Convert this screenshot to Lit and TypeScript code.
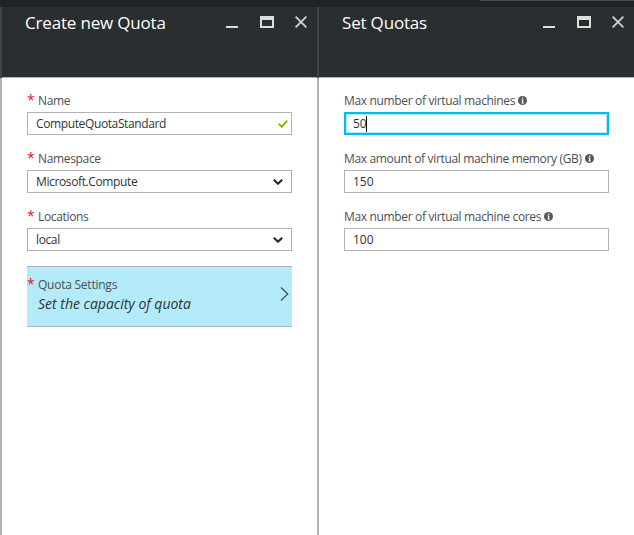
import { LitElement, html, css, nothing } from "lit";
import { customElement, property } from "lit/decorators.js";

const infoIcon = html`<svg class="info" width="9" height="9" viewBox="0 0 9 9">
  <circle cx="4.5" cy="4.5" r="4.5" fill="#55575a" />
  <path d="M4 1.5h1.3v1.2H4zM3.5 3.6h1.8v3.1h.6v.8H3.4v-.8H4V4.4h-.5z" fill="#fff" />
</svg>`;

@customElement("blade-pane")
class BladePane extends LitElement {
  @property() heading = "";

  static styles = css`
    :host {
      display: flex;
      flex-direction: column;
      width: 317px;
      flex: none;
      box-sizing: border-box;
      background: #fff;
    }
    header {
      display: flex;
      height: 71px;
      box-sizing: border-box;
      border-left: 2px solid #3f4447;
      background: #292e31;
      color: #fff;
      padding: 4px 10px 0 23px;
      justify-content: space-between;
      align-items: flex-start;
      box-shadow: inset 0 -1px #b2b2b2;
    }
    .heading {
      font-size: 17px;
      line-height: 24px;
      letter-spacing: -0.18px;
      white-space: nowrap;
    }
    .controls {
      display: block;
      margin-top: 5px;
      flex: none;
    }
    .body {
      flex: 1;
      border-left: 2px solid #b2b2b2;
      padding: 12px 25px 0 25px;
    }
  `;

  render() {
    return html`<header>
        <span class="heading">${this.heading}</span>
        <svg class="controls" width="81" height="12" viewBox="0 0 81 12">
          <path d="M0 10h12v2H0z" fill="#dcdedd" />
          <path d="M34 0h14v12H34zM36 4v6h10V4z" fill="#dcdedd" fill-rule="evenodd" />
          <path d="M69.6.6l10.8 10.8M80.4.6L69.6 11.4" stroke="#d0d3d5" stroke-width="1.8" />
        </svg>
      </header>
      <div class="body"><slot></slot></div>`;
  }
}

@customElement("form-field")
class FormField extends LitElement {
  @property() label = "";
  @property() value = "";
  @property() kind = "text";
  @property({ type: Boolean }) required = false;
  @property({ type: Boolean }) info = false;
  @property({ type: Boolean }) focused = false;

  static styles = css`
    :host {
      display: block;
      height: 45px;
      margin-bottom: 13px;
    }
    .label {
      display: flex;
      align-items: center;
      height: 22px;
      color: #4c4f52;
      white-space: nowrap;
      letter-spacing: -0.34px;
    }
    .star {
      width: 11px;
      flex: none;
      color: #e0142d;
      font-size: 14px;
      margin-bottom: 2px;
    }
    .info {
      margin: 0 0 1px 3px;
      flex: none;
    }
    .box {
      display: flex;
      align-items: center;
      justify-content: space-between;
      box-sizing: border-box;
      height: 23px;
      border: 1px solid #b2b2b2;
      padding-left: 8px;
      color: #303336;
    }
    .focused {
      border: 2px solid #00bcf2;
      box-shadow: inset 0 0 0 1px #b3ebfb;
      padding-left: 7px;
    }
    .value {
      display: flex;
      align-items: center;
    }
    .value.words {
      letter-spacing: -0.38px;
    }
    .caret {
      width: 1px;
      height: 16px;
      margin-left: -1px;
      background: #000;
    }
    .check {
      margin-right: 3px;
    }
    .chevron {
      margin-right: 8px;
    }
  `;

  render() {
    return html`<div class="label">
        ${this.required ? html`<span class="star">*</span>` : nothing}
        <span>${this.label}</span>${this.info ? infoIcon : nothing}
      </div>
      <div class="box ${this.focused ? "focused" : ""}">
        <span class="value ${this.kind === "text" ? "" : "words"}">${this.value}${this.focused ? html`<i class="caret"></i>` : nothing}</span>
        ${this.kind === "valid"
          ? html`<svg class="check" width="10" height="8" viewBox="0 0 10 8">
              <path d="M.6 3.6L3.8 6.7L9.3.7" fill="none" stroke="#7fba00" stroke-width="1.9" />
            </svg>`
          : nothing}
        ${this.kind === "select"
          ? html`<svg class="chevron" width="10" height="6" viewBox="0 0 10 6">
              <path d="M.8.7L5 4.7L9.2.7" fill="none" stroke="#25282b" stroke-width="2.1" />
            </svg>`
          : nothing}
      </div>`;
  }
}

@customElement("app-root")
class AppRoot extends LitElement {
  static styles = css`
    :host {
      display: flex;
      flex-direction: column;
      height: 535px;
      overflow: hidden;
      background: #fff;
      font: 12px/16px "Open Sans", "Noto Sans", sans-serif;
    }
    .topbar {
      height: 7px;
      flex: none;
      display: flex;
      justify-content: flex-end;
      background: #1f2226;
    }
    .search-edge {
      width: 154px;
      height: 1px;
      background: #4a4f53;
    }
    .blades {
      flex: 1;
      display: flex;
    }
    .selector {
      display: flex;
      justify-content: space-between;
      box-sizing: border-box;
      height: 61px;
      margin-top: 15px;
      border: solid #b2b2b2;
      border-width: 1px 0;
      background: #b3ebfb;
      padding: 10px 3px 0 0;
      color: #4c4f52;
    }
    .star {
      width: 11px;
      color: #e0142d;
      font-size: 14px;
      margin-top: -1px;
    }
    .texts {
      flex: 1;
      display: flex;
      flex-direction: column;
      letter-spacing: -0.24px;
    }
    .summary {
      font-size: 14px;
      line-height: 22px;
      letter-spacing: 0;
      font-style: italic;
      color: #303336;
    }
    .arrow {
      margin-top: 10px;
    }
  `;

  render() {
    return html`<div class="topbar"><span class="search-edge"></span></div>
      <div class="blades">
        <blade-pane heading="Create new Quota">
          <form-field label="Name" value="ComputeQuotaStandard" kind="valid" required></form-field>
          <form-field label="Namespace" value="Microsoft.Compute" kind="select" required></form-field>
          <form-field label="Locations" value="local" kind="select" required></form-field>
          <div class="selector">
            <span class="star">*</span>
            <div class="texts">
              <span>Quota Settings</span>
              <span class="summary">Set the capacity of quota</span>
            </div>
            <svg class="arrow" width="9" height="14" viewBox="0 0 9 14">
              <path d="M1 .5L7.8 7L1 13.5" fill="none" stroke="#3e4f58" stroke-width="1.2" />
            </svg>
          </div>
        </blade-pane>
        <blade-pane heading="Set Quotas">
          <form-field label="Max number of virtual machines" value="50" info focused></form-field>
          <form-field label="Max amount of virtual machine memory (GB)" value="150" info></form-field>
          <form-field label="Max number of virtual machine cores" value="100" info></form-field>
        </blade-pane>
      </div>`;
  }
}
